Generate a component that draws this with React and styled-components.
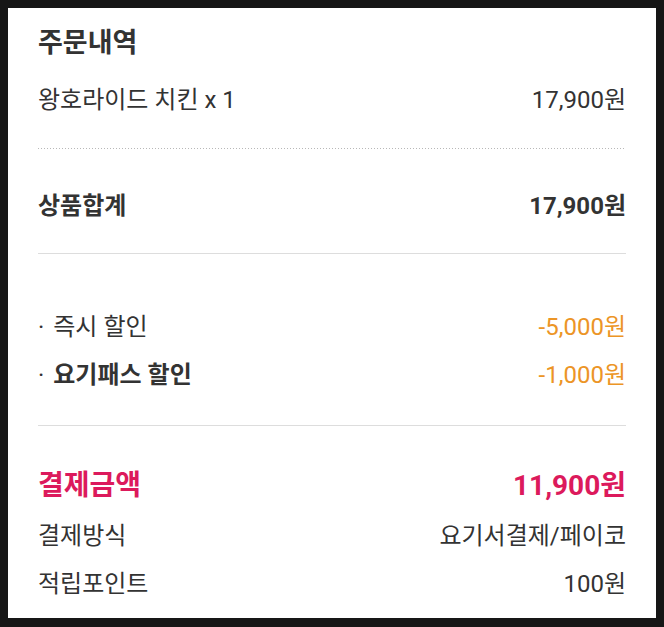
import React from "react";
import styled, { createGlobalStyle } from "styled-components";

const GlobalStyle = createGlobalStyle`
  html, body {
    margin: 0;
    padding: 0;
    background: #161616;
  }
  body {
    padding: 8px;
    font-family: Roboto, "Noto Sans CJK KR", sans-serif;
    color: #333333;
  }
`;

const order = {
  items: [{ name: "왕호라이드 치킨 x 1", price: "17,900원" }],
  subtotal: "17,900원",
  discounts: [
    { name: "즉시 할인", amount: "-5,000원", bold: false },
    { name: "요기패스 할인", amount: "-1,000원", bold: true },
  ],
  total: "11,900원",
  method: "요기서결제/페이코",
  points: "100원",
};

export default function App() {
  return (
    <>
      <GlobalStyle />
      <Card>
        <Title>주문내역</Title>
        {order.items.map((el, i) => (
          <Row key={i} height={68}>
            <span>{el.name}</span>
            <span>{el.price}</span>
          </Row>
        ))}
        <DottedLine />
        <Row height={104} bold offset={4}>
          <span>상품합계</span>
          <span>{order.subtotal}</span>
        </Row>
        <SolidLine />
        <Discounts>
          {order.discounts.map((el, i) => (
            <Row key={i} height={48} bold={el.bold}>
              <Bullet>{el.name}</Bullet>
              <Amount>{el.amount}</Amount>
            </Row>
          ))}
        </Discounts>
        <SolidLine />
        <Payment>
          <Row height={50} total>
            <span>결제금액</span>
            <span>{order.total}</span>
          </Row>
          <Row height={50}>
            <span>결제방식</span>
            <span>{order.method}</span>
          </Row>
          <Row height={46}>
            <span>적립포인트</span>
            <span>{order.points}</span>
          </Row>
        </Payment>
      </Card>
    </>
  );
}

const Card = styled.div`
  background: #ffffff;
  height: 610px;
  box-sizing: border-box;
  padding: 15px 30px 0;
`;

const Title = styled.h2`
  margin: 0;
  height: 40px;
  line-height: 40px;
  font-size: 27px;
  font-weight: 700;
  color: #333333;
`;

const Row = styled.div`
  display: flex;
  justify-content: space-between;
  align-items: center;
  box-sizing: border-box;
  height: ${(p) => p.height}px;
  padding-top: ${(p) => p.offset || 0}px;
  font-size: ${(p) => (p.total ? 28 : 24)}px;
  font-weight: ${(p) => (p.bold || p.total ? 700 : 400)};
  color: ${(p) => (p.total ? "#dc1a5c" : "#333333")};
`;

const DottedLine = styled.div`
  margin-top: 17px;
  height: 1px;
  background-image: linear-gradient(to right, #b8b8b8 1px, transparent 1px);
  background-size: 3px 1px;
`;

const SolidLine = styled.div`
  height: 1px;
  background: #dddddd;
`;

const Discounts = styled.div`
  padding: 46px 0 29px;
`;

const Payment = styled.div`
  padding-top: 32px;
`;

const Bullet = styled.span`
  &::before {
    content: "·";
    font-weight: 400;
    margin-right: 9px;
  }
`;

const Amount = styled.span`
  color: #ec9526;
  font-weight: 400;
`;
